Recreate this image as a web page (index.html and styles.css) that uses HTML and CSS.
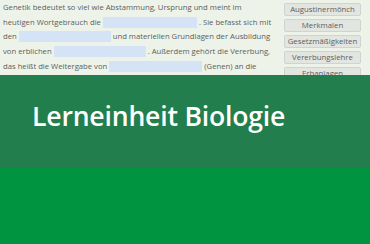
FILE: index.html
```html
<!DOCTYPE html>
<html lang="de">
<head>
    <meta charset="UTF-8">
    <meta name="viewport" content="width=device-width, initial-scale=1.0">
    <title>Lerneinheit Biologie</title>
    <link rel="stylesheet" href="styles.css">
</head>
<body>

    <div class="exercise">
        <p class="cloze">
            Genetik bedeutet so viel wie Abstammung, Ursprung und meint im<br>
            heutigen Wortgebrauch die <span class="blank w94"></span> . Sie befasst sich mit<br>
            den <span class="blank w92"></span> und materiellen Grundlagen der Ausbildung<br>
            von erblichen <span class="blank w92"></span> . Außerdem gehört die Vererbung,<br>
            das heißt die Weitergabe von <span class="blank w93"></span> (Genen) an die
        </p>

        <div class="options">
            <span class="option">Augustinermönch</span>
            <span class="option">Merkmalen</span>
            <span class="option">Gesetzmäßigkeiten</span>
            <span class="option">Vererbungslehre</span>
            <span class="option">Erbanlagen</span>
        </div>
    </div>

    <div class="banner">
        <h1>Lerneinheit Biologie</h1>
    </div>

    <div class="footer"></div>

</body>
</html>
```

FILE: styles.css
```css
/* Basic Reset */
* {
    margin: 0;
    padding: 0;
    box-sizing: border-box;
}

body {
    font-family: 'Open Sans', sans-serif;
    width: 370px;
    height: 244px;
    overflow: hidden;
    display: flex;
    flex-direction: column;
}

/* Cloze exercise preview */
.exercise {
    height: 75px;
    flex-shrink: 0;
    background: #eef3ea;
    display: flex;
    justify-content: space-between;
    overflow: hidden;
}

.cloze {
    font-size: 7.7px;
    line-height: 14.7px;
    color: #5c605a;
    padding: 0 0 0 3px;
    white-space: nowrap;
}

.blank {
    display: inline-block;
    height: 11px;
    vertical-align: -3px;
    background: #d4e3f6;
}

.w92 { width: 92px; }
.w93 { width: 93px; }
.w94 { width: 94px; }

.options {
    width: 77px;
    flex-shrink: 0;
    margin-right: 9px;
    padding-top: 3px;
    display: flex;
    flex-direction: column;
    gap: 3px;
}

.option {
    height: 13px;
    flex-shrink: 0;
    background: #e3e5e1;
    border: 1px solid #d0d3ce;
    border-radius: 2px;
    font-size: 7.8px;
    line-height: 11px;
    text-align: center;
    color: #5c605a;
}

/* Title band */
.banner {
    height: 92px;
    flex-shrink: 0;
    background: #237e4d;
    display: flex;
    align-items: center;
    padding: 0 0 10px 32px;
}

.banner h1 {
    font-size: 26.6px;
    font-weight: 600;
    color: #fff;
    letter-spacing: -0.2px;
}

.footer {
    flex: 1;
    background: #009441;
}
```
